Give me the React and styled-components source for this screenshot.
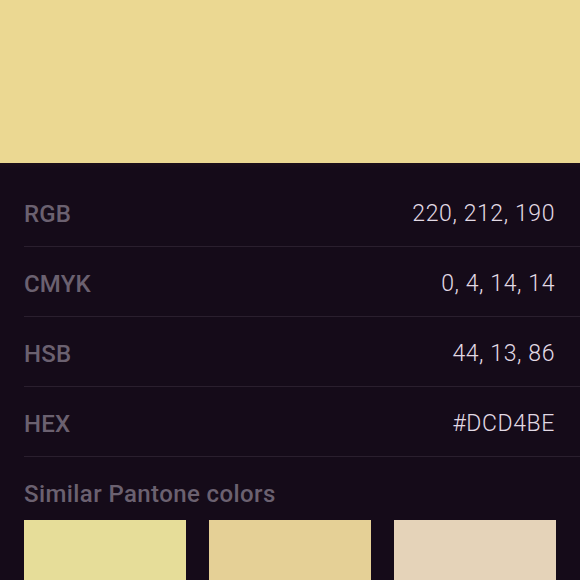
import React from "react";
import styled, { createGlobalStyle } from "styled-components";

const GlobalStyle = createGlobalStyle`
  html, body {
    margin: 0;
    padding: 0;
    background: #150b19;
    overflow: hidden;
  }
  body {
    font-family: Roboto, "Liberation Sans", sans-serif;
  }
`;

const rows = [
  { label: "RGB", value: "220, 212, 190" },
  { label: "CMYK", value: "0, 4, 14, 14" },
  { label: "HSB", value: "44, 13, 86" },
  { label: "HEX", value: "#DCD4BE" },
];

const similar = ["#e6dd99", "#e5d096", "#e5d3b9"];

const App = () => {
  return (
    <Page>
      <GlobalStyle />
      <Preview />
      <Panel>
        <List>
          {rows.map((x) => (
            <Row key={x.label}>
              <Label>{x.label}</Label>
              <Value>{x.value}</Value>
            </Row>
          ))}
        </List>
        <Heading>Similar Pantone colors</Heading>
        <Swatches>
          {similar.map((c) => (
            <Swatch key={c} color={c} />
          ))}
        </Swatches>
      </Panel>
    </Page>
  );
};

const Page = styled.div`
  width: 580px;
  height: 580px;
  display: flex;
  flex-direction: column;
  background: #150b19;
  overflow: hidden;
`;

const Preview = styled.div`
  height: 163px;
  flex-shrink: 0;
  background: #ebd892;
`;

const Panel = styled.div`
  flex: 1;
  display: flex;
  flex-direction: column;
  padding: 14px 0 0 24px;
  background: linear-gradient(#1c0f1a 0px, #150b19 6px);
`;

const List = styled.div`
  display: flex;
  flex-direction: column;
`;

const Row = styled.div`
  height: 70px;
  box-sizing: border-box;
  padding: 4px 25px 0 0;
  display: flex;
  align-items: center;
  justify-content: space-between;
  border-bottom: 1px solid #2a1f2e;
`;

const Label = styled.span`
  font-size: 24px;
  font-weight: 500;
  color: #6b6170;
  letter-spacing: 0.2px;
`;

const Value = styled.span`
  font-size: 23px;
  font-weight: 300;
  color: #e2dae5;
  letter-spacing: 0.6px;
`;

const Heading = styled.div`
  margin-top: 23px;
  font-size: 24px;
  font-weight: 500;
  color: #6b6170;
  letter-spacing: 0.4px;
`;

const Swatches = styled.div`
  margin-top: 12px;
  display: grid;
  grid-template-columns: repeat(3, 162px);
  gap: 23px;
`;

const Swatch = styled.div`
  height: 120px;
  background: ${(props) => props.color};
`;

export default App;
